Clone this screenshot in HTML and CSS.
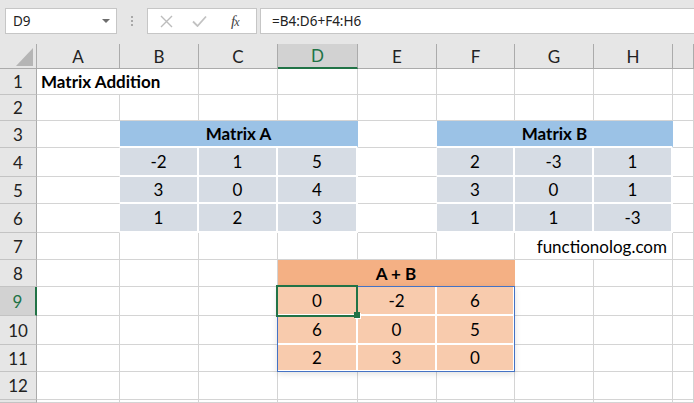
FILE: index.html
```html
<!DOCTYPE html>
<html>
<head>
<meta charset="utf-8">
<link rel="stylesheet" href="styles.css">
</head>
<body>
<div class="topbar">
  <div class="namebox"><span>D9</span><svg class="dd" width="8" height="5" viewBox="0 0 8 5"><polygon points="0,0 8,0 4,4" fill="#6d6d6d"/></svg></div>
  <div class="grip"><i></i><i></i><i></i></div>
  <div class="fxbox">
    <svg class="ic-x" width="13" height="13" viewBox="0 0 13 13"><path d="M1 1 L12 12 M12 1 L1 12" stroke="#bcbcbc" stroke-width="1.4" fill="none"/></svg>
    <svg class="ic-ok" width="15" height="12" viewBox="0 0 15 12"><path d="M1 6.5 L5.5 11 L14 1.5" stroke="#c2c2c2" stroke-width="1.8" fill="none"/></svg>
    <span class="fx">f<span class="fxx">x</span></span>
  </div>
  <div class="formula">=B4:D6+F4:H6</div>
</div>
<div class="sheet">
  <div class="corner"><svg width="37" height="25" viewBox="0 0 37 25"><polygon points="33,4 33,22 16,22" fill="#b5b5b5"/></svg></div>
  <div class="ch">A</div><div class="ch">B</div><div class="ch">C</div><div class="ch sel">D</div><div class="ch">E</div><div class="ch">F</div><div class="ch">G</div><div class="ch">H</div><div class="ch"></div>

  <div class="rh">1</div><div class="c s2 title">Matrix Addition</div><div class="c"></div><div class="c"></div><div class="c"></div><div class="c"></div><div class="c"></div><div class="c"></div><div class="c"></div>

  <div class="rh">2</div><div class="c"></div><div class="c"></div><div class="c"></div><div class="c"></div><div class="c"></div><div class="c"></div><div class="c"></div><div class="c"></div><div class="c"></div>

  <div class="rh">3</div><div class="c wr"></div><div class="c s3 bh">Matrix A</div><div class="c wr"></div><div class="c s3 bh">Matrix B</div><div class="c"></div>

  <div class="rh">4</div><div class="c wr"></div><div class="c bd">-2</div><div class="c bd">1</div><div class="c bd">5</div><div class="c wr"></div><div class="c bd">2</div><div class="c bd">-3</div><div class="c bd">1</div><div class="c"></div>

  <div class="rh">5</div><div class="c wr"></div><div class="c bd">3</div><div class="c bd">0</div><div class="c bd">4</div><div class="c wr"></div><div class="c bd">3</div><div class="c bd">0</div><div class="c bd">1</div><div class="c"></div>

  <div class="rh">6</div><div class="c wr"></div><div class="c bd">1</div><div class="c bd">2</div><div class="c bd">3</div><div class="c wr"></div><div class="c bd">1</div><div class="c bd">1</div><div class="c bd">-3</div><div class="c"></div>

  <div class="rh">7</div><div class="c"></div><div class="c"></div><div class="c"></div><div class="c"></div><div class="c"></div><div class="c"></div><div class="c s2 site">functionolog.com</div><div class="c"></div>

  <div class="rh">8</div><div class="c"></div><div class="c"></div><div class="c"></div><div class="c s3 oh">A + B</div><div class="c"></div><div class="c"></div><div class="c"></div>

  <div class="rh rsel">9</div><div class="c"></div><div class="c"></div><div class="c"></div>
  <div class="c od active-cell">0<div class="spill"></div><div class="cursor"><div class="handle"></div></div></div>
  <div class="c od">-2</div><div class="c od">6</div><div class="c"></div><div class="c"></div><div class="c"></div>

  <div class="rh">10</div><div class="c"></div><div class="c"></div><div class="c"></div><div class="c od">6</div><div class="c od">0</div><div class="c od">5</div><div class="c"></div><div class="c"></div><div class="c"></div>

  <div class="rh">11</div><div class="c"></div><div class="c"></div><div class="c"></div><div class="c od">2</div><div class="c od">3</div><div class="c od">0</div><div class="c"></div><div class="c"></div><div class="c"></div>

  <div class="rh">12</div><div class="c"></div><div class="c"></div><div class="c"></div><div class="c"></div><div class="c"></div><div class="c"></div><div class="c"></div><div class="c"></div><div class="c"></div>

  <div class="rh"></div><div class="c"></div><div class="c"></div><div class="c"></div><div class="c"></div><div class="c"></div><div class="c"></div><div class="c"></div><div class="c"></div><div class="c"></div>
</div>
</body>
</html>
```

FILE: styles.css
```css
* { box-sizing: border-box; margin: 0; padding: 0; }
html, body { width: 694px; height: 403px; overflow: hidden; background: #fff; }
body { font-family: Lato, "Liberation Sans", sans-serif; color: #000; }

.topbar {
  height: 44px;
  background: #e6e6e6;
  display: flex;
  align-items: flex-start;
  padding: 8px 0 0 5px;
  font-family: "Noto Sans", "Liberation Sans", sans-serif;
  font-size: 13.5px;
  color: #222;
}
.namebox {
  width: 112px; height: 26px;
  background: #fff;
  border: 1px solid #c6c6c6;
  display: flex; align-items: center; justify-content: space-between;
  padding: 0 6px 0 7px;
}
.grip {
  width: 30px; height: 26px;
  display: flex; flex-direction: column; align-items: center; justify-content: center; gap: 2px;
}
.grip i { display: block; width: 2px; height: 2px; background: #a8a8a8; }
.fxbox {
  width: 110px; height: 26px;
  background: #fff;
  border: 1px solid #c6c6c6;
  display: flex; align-items: center;
  padding-left: 12px;
}
.ic-ok { margin-left: 19px; }
.fx {
  margin-left: 24px;
  font-family: "Liberation Serif", serif;
  font-style: italic;
  font-size: 15px;
  color: #444;
  letter-spacing: -1px;
}
.fxx { font-size: 12px; }
.formula {
  flex: 1;
  margin-left: 3px;
  height: 26px;
  background: #fff;
  border: 1px solid #c6c6c6;
  border-right: none;
  display: flex; align-items: center;
  padding-left: 11px;
}

.sheet {
  display: grid;
  grid-template-columns: 37px 83px 79px 79px 80px 79px 78px 79px 79px 1fr;
  grid-template-rows: 25px 26px 26px 27px 29px 27px 29px 27px 27px 29px 29px 27px 28px 1fr;
  height: 359px;
  font-size: 17px;
}
.corner {
  background: #e6e6e6;
  border-right: 1px solid #ababab;
  border-bottom: 1px solid #ababab;
}
.corner svg { display: block; }
.ch {
  background: #e6e6e6;
  border-right: 1px solid #ababab;
  border-bottom: 1px solid #ababab;
  display: flex; align-items: center; justify-content: center;
  color: #222;
}
.ch.sel {
  background: #d2d2d2;
  color: #217346;
  border-bottom: 2px solid #217346;
}
.rh {
  background: #e6e6e6;
  border-right: 1px solid #ababab;
  border-bottom: 1px solid #c3c3c3;
  display: flex; align-items: center; justify-content: center;
  color: #222;
  overflow: hidden;
}
.rh.rsel {
  background: #d2d2d2;
  color: #217346;
  border-right: 2px solid #217346;
}
.c {
  border-right: 1px solid #d4d4d4;
  border-bottom: 1px solid #d4d4d4;
  display: flex; align-items: center; justify-content: center;
  white-space: nowrap;
  position: relative;
}
.s2 { grid-column: span 2; }
.s3 { grid-column: span 3; }
.title { justify-content: flex-start; padding-left: 4px; font-weight: bold; }
.site { justify-content: flex-end; padding-right: 5px; }
.wr { border-right-color: #fff; }

.bh { background: #9bc2e6; border-right-color: #9bc2e6; border-bottom: 2px solid #fff; font-weight: bold; }
.bd { background: #d6dce4; border-right: 2px solid #fff; border-bottom: 2px solid #fff; }
.oh { background: #f4b084; border-right-color: #f4b084; border-bottom-color: #f4b084; font-weight: bold; }
.od { background: #f8cbad; border-right: 2px solid #fff; border-bottom: 2px solid #fff; }

.active-cell { z-index: 2; }
.spill {
  position: absolute;
  left: -1px; top: -1px;
  width: 238px; height: 86px;
  border: 1px solid #4472c4;
  box-shadow: 0 2px 6px rgba(0,0,0,0.12);
  pointer-events: none;
}
.cursor {
  position: absolute;
  left: -2px; top: -2px;
  width: 82px; height: 32px;
  border: 2px solid #217346;
}
.handle {
  position: absolute;
  left: 76px; top: 25px;
  width: 6px; height: 6px;
  background: #217346;
  box-shadow: 1px 1px 0 #fff;
}
```
